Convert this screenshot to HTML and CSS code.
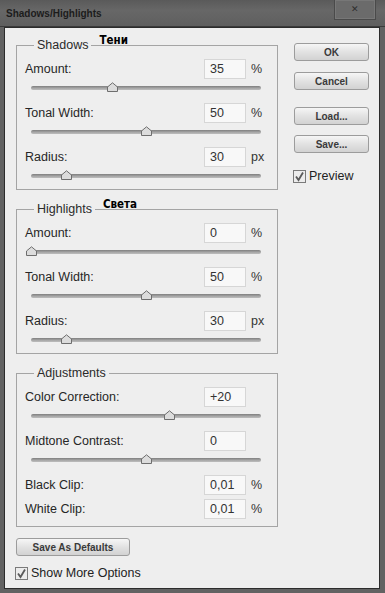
FILE: index.html
```html
<!DOCTYPE html>
<html>
<head>
<meta charset="utf-8">
<link rel="stylesheet" href="styles.css">
</head>
<body>
<div class="window">
  <div class="titlebar">
    <span class="title">Shadows/Highlights</span>
    <span class="close">✕</span>
  </div>
  <div class="panel">
    <div class="main">
      <fieldset class="group">
        <legend>Shadows<span class="note">Тени</span></legend>
        <div class="row"><span class="label">Amount:</span><span class="field">35</span><span class="unit">%</span></div>
        <div class="slider"><span class="track"></span><svg class="thumb" style="left:35%" viewBox="0 0 13 10"><path d="M1.5 9.5 V5 L6.5 0.8 L11.5 5 V9.5 Z" fill="#dcdcdc" stroke="#6e6e6e"/></svg></div>
        <div class="row"><span class="label">Tonal Width:</span><span class="field">50</span><span class="unit">%</span></div>
        <div class="slider"><span class="track"></span><svg class="thumb" style="left:50%" viewBox="0 0 13 10"><path d="M1.5 9.5 V5 L6.5 0.8 L11.5 5 V9.5 Z" fill="#dcdcdc" stroke="#6e6e6e"/></svg></div>
        <div class="row"><span class="label">Radius:</span><span class="field">30</span><span class="unit">px</span></div>
        <div class="slider"><span class="track"></span><svg class="thumb" style="left:15.3%" viewBox="0 0 13 10"><path d="M1.5 9.5 V5 L6.5 0.8 L11.5 5 V9.5 Z" fill="#dcdcdc" stroke="#6e6e6e"/></svg></div>
      </fieldset>
      <fieldset class="group">
        <legend>Highlights<span class="note">Света</span></legend>
        <div class="row"><span class="label">Amount:</span><span class="field">0</span><span class="unit">%</span></div>
        <div class="slider"><span class="track"></span><svg class="thumb" style="left:0%" viewBox="0 0 13 10"><path d="M1.5 9.5 V5 L6.5 0.8 L11.5 5 V9.5 Z" fill="#dcdcdc" stroke="#6e6e6e"/></svg></div>
        <div class="row"><span class="label">Tonal Width:</span><span class="field">50</span><span class="unit">%</span></div>
        <div class="slider"><span class="track"></span><svg class="thumb" style="left:50%" viewBox="0 0 13 10"><path d="M1.5 9.5 V5 L6.5 0.8 L11.5 5 V9.5 Z" fill="#dcdcdc" stroke="#6e6e6e"/></svg></div>
        <div class="row"><span class="label">Radius:</span><span class="field">30</span><span class="unit">px</span></div>
        <div class="slider"><span class="track"></span><svg class="thumb" style="left:15.3%" viewBox="0 0 13 10"><path d="M1.5 9.5 V5 L6.5 0.8 L11.5 5 V9.5 Z" fill="#dcdcdc" stroke="#6e6e6e"/></svg></div>
      </fieldset>
      <fieldset class="group adjust">
        <legend>Adjustments</legend>
        <div class="row"><span class="label">Color Correction:</span><span class="field">+20</span><span class="unit"></span></div>
        <div class="slider"><span class="track"></span><svg class="thumb" style="left:60%" viewBox="0 0 13 10"><path d="M1.5 9.5 V5 L6.5 0.8 L11.5 5 V9.5 Z" fill="#dcdcdc" stroke="#6e6e6e"/></svg></div>
        <div class="row"><span class="label">Midtone Contrast:</span><span class="field">0</span><span class="unit"></span></div>
        <div class="slider"><span class="track"></span><svg class="thumb" style="left:50%" viewBox="0 0 13 10"><path d="M1.5 9.5 V5 L6.5 0.8 L11.5 5 V9.5 Z" fill="#dcdcdc" stroke="#6e6e6e"/></svg></div>
        <div class="row clip"><span class="label">Black Clip:</span><span class="field">0,01</span><span class="unit">%</span></div>
        <div class="row clip"><span class="label">White Clip:</span><span class="field">0,01</span><span class="unit">%</span></div>
      </fieldset>
      <div class="btn defaults">Save As Defaults</div>
      <label class="check more"><svg class="box" viewBox="0 0 13 13"><rect x="0.5" y="0.5" width="12" height="12" fill="#ececec" stroke="#7a7a7a"/><path d="M3 6.5 L5.5 10 L10 2.5" fill="none" stroke="#5a5a5a" stroke-width="1.8"/></svg><span>Show More Options</span></label>
    </div>
    <div class="side">
      <div class="btn ok">OK</div>
      <div class="btn cancel">Cancel</div>
      <div class="btn load">Load...</div>
      <div class="btn save">Save...</div>
      <label class="check preview"><svg class="box" viewBox="0 0 13 13"><rect x="0.5" y="0.5" width="12" height="12" fill="#ececec" stroke="#7a7a7a"/><path d="M3 6.5 L5.5 10 L10 2.5" fill="none" stroke="#5a5a5a" stroke-width="1.8"/></svg><span>Preview</span></label>
    </div>
  </div>
</div>
</body>
</html>
```
FILE: styles.css
```css
* { box-sizing: border-box; }
html, body { margin: 0; padding: 0; }
body {
  width: 385px;
  height: 593px;
  overflow: hidden;
  background: #5e5e5e;
  font-family: "Liberation Sans", Arial, sans-serif;
  color: #222;
}
.window {
  width: 385px;
  height: 593px;
  display: flex;
  flex-direction: column;
  background: #626262;
  padding: 0 5px 4px 4px;
}
.titlebar {
  height: 27px;
  display: flex;
  justify-content: space-between;
  align-items: flex-start;
  background: linear-gradient(#5a5a5a, #676767 40%, #5f5f5f);
  margin: 0 -5px 0 -4px;
  padding: 0 9px 0 6px;
  border-bottom: 1px solid #3a3a3a;
}
.title {
  font-size: 10px;
  font-weight: bold;
  color: #1c1c1c;
  margin-top: 8px;
}
.close {
  width: 42px;
  height: 20px;
  border: 1px solid #4a4a4a;
  border-top: none;
  background: #6b6b6b;
  box-shadow: inset 0 0 0 1px #777;
  color: #2e2e2e;
  font-size: 9px;
  line-height: 19px;
  text-align: center;
}
.panel {
  flex: 1;
  display: flex;
  background: #eeeeee;
  border: 1px solid #2c2c2c;
  padding: 9px 0 0 11px;
}
.main {
  width: 262px;
  display: flex;
  flex-direction: column;
}
.group {
  margin: 0 0 11px 0;
  padding: 6px 8px 4px 8px;
  border: 1px solid #a4a4a4;
  min-width: 0;
}
.group.adjust { padding-bottom: 7px; }
legend {
  position: relative;
  margin-left: 9px;
  padding: 0 3px;
  font-size: 12.5px;
  line-height: 16px;
  color: #2a2a2a;
}
.note {
  position: absolute;
  left: calc(100% + 8px);
  top: -5px;
  font-family: "DejaVu Sans Condensed", "DejaVu Sans", sans-serif;
  font-weight: bold;
  font-size: 11.5px;
  color: #000;
}
.row {
  display: flex;
  align-items: center;
  height: 20px;
}
.row.clip { margin-bottom: 4px; }
.row.clip:last-child { margin-bottom: 0; }
.label {
  flex: 1;
  font-size: 12.5px;
  color: #262626;
}
.field {
  width: 42px;
  height: 20px;
  border: 1px solid #d6d6d6;
  background: #f8f8f8;
  padding-left: 5px;
  font-size: 12.5px;
  line-height: 18px;
  color: #333;
}
.unit {
  width: 23px;
  padding-left: 5px;
  font-size: 12.5px;
  color: #333;
}
.slider {
  position: relative;
  height: 18px;
  margin: 0 8px 6px 6px;
}
.slider:last-child { margin-bottom: 0; }
.track {
  position: absolute;
  left: 0;
  right: 0;
  top: 7px;
  height: 4px;
  border-radius: 2px;
  background: linear-gradient(#7f7f7f, #a9a9a9 60%, #bdbdbd);
}
.thumb {
  position: absolute;
  top: 3px;
  width: 13px;
  height: 10px;
  margin-left: -6px;
}
.btn {
  height: 18px;
  border: 1px solid #9c9c9c;
  border-radius: 3px;
  background: linear-gradient(#f6f6f6, #e2e2e2 50%, #d2d2d2);
  display: flex;
  align-items: center;
  justify-content: center;
  font-size: 10px;
  font-weight: bold;
  color: #3a3a3a;
}
.defaults {
  width: 114px;
  margin-top: 0;
}
.side {
  width: 75px;
  margin-left: 16px;
  padding-top: 6px;
  display: flex;
  flex-direction: column;
}
.cancel { margin-top: 11px; }
.load { margin-top: 17px; }
.save { margin-top: 10px; }
.check {
  display: flex;
  align-items: center;
  font-size: 12.5px;
  color: #222;
}
.box {
  width: 13px;
  height: 13px;
  margin-right: 3px;
  flex: none;
}
.preview { margin-top: 16px; margin-left: -1px; }
.more { margin-top: 10px; margin-left: -1px; }
```
